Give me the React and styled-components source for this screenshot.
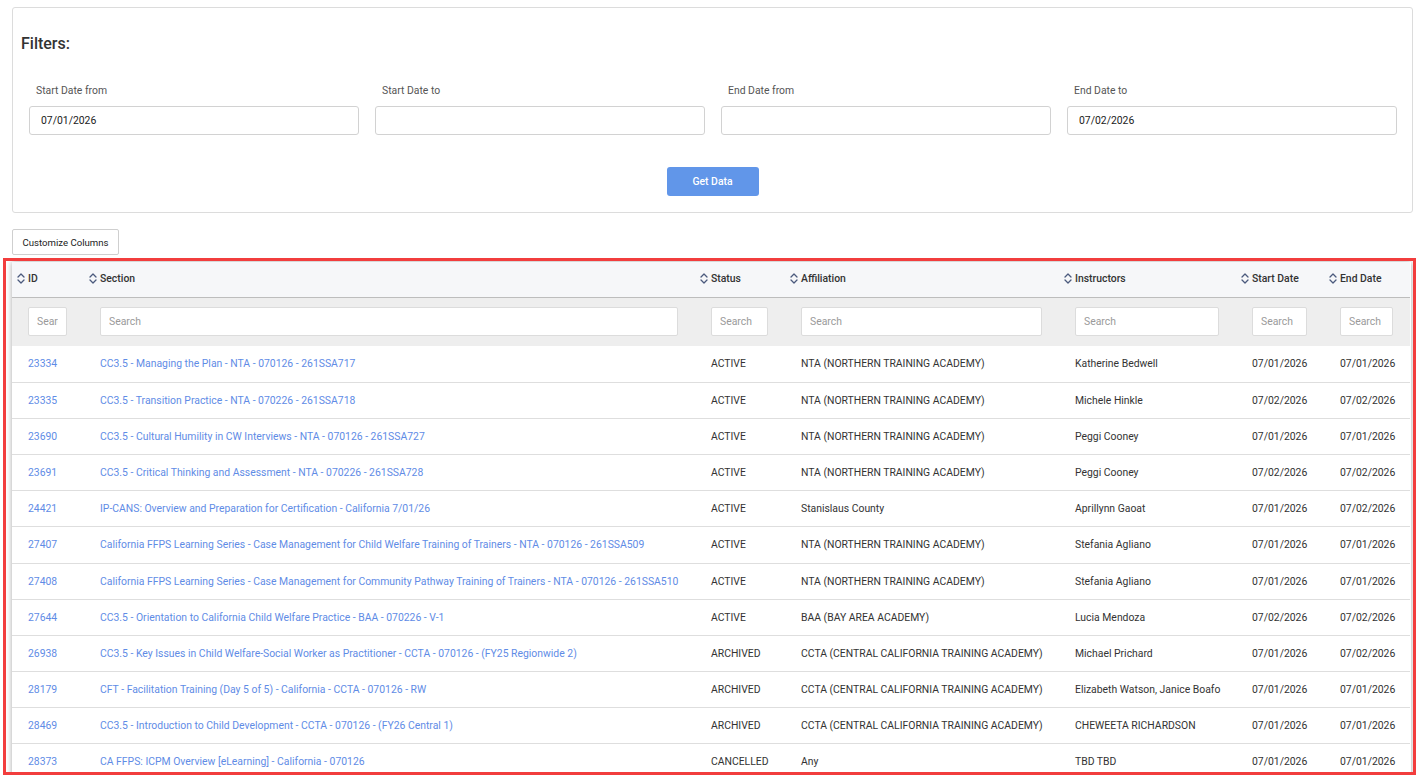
import React from "react";
import styled, { createGlobalStyle } from "styled-components";

const Global = createGlobalStyle`
  html, body { margin: 0; padding: 0; background: #fff; }
  body { font-family: Roboto, "Liberation Sans", Arial, sans-serif; color: #333; overflow: hidden; }
  * { box-sizing: border-box; }
`;

const Page = styled.div`
  padding: 7px 6px 0 12px;
  display: flex;
  flex-direction: column;
  height: 777px;
`;

const FilterCard = styled.section`
  border: 1px solid #dcdcdc;
  border-radius: 3px;
  padding: 26px 16px 16px 8px;
  display: flex;
  flex-direction: column;
`;

const Title = styled.h5`
  margin: 0;
  font-size: 16px;
  line-height: 19px;
  font-weight: 500;
  color: #333;
`;

const FilterGrid = styled.div`
  margin-top: 32px;
  padding-left: 8px;
  display: grid;
  grid-template-columns: repeat(4, 330px);
  column-gap: 16px;
`;

const Field = styled.div`
  display: flex;
  flex-direction: column;
`;

const Label = styled.label`
  font-size: 10.4px;
  line-height: 12px;
  color: #555;
  padding-left: 7px;
  margin-bottom: 9px;
`;

const DateInput = styled.input`
  height: 29px;
  border: 1px solid #d2d2d2;
  border-radius: 3px;
  padding: 0 11px;
  font-family: inherit;
  font-size: 10.4px;
  color: #222;
  outline: none;
`;

const ButtonRow = styled.div`
  display: flex;
  justify-content: center;
  margin-top: 32px;
  padding-left: 8px;
`;

const PrimaryButton = styled.button`
  width: 92px;
  height: 29px;
  background: #6196e9;
  border: none;
  border-radius: 3px;
  color: #fff;
  font-family: inherit;
  font-size: 10.4px;
  font-weight: 500;
`;

const SecondaryButton = styled.button`
  align-self: flex-start;
  margin-top: 16px;
  width: 107px;
  height: 26px;
  background: #fff;
  border: 1px solid #cfcfcf;
  border-radius: 2px;
  font-family: inherit;
  font-size: 9.6px;
  color: #222;
  padding: 0;
`;

const Highlight = styled.div`
  margin: 3px -3px 0 -9px;
  height: 517px;
  border: 3px solid #f23d3d;
  padding: 1px 2px 0 6px;
  overflow: hidden;
`;

const TableCard = styled.div`
  box-shadow: 0 0 6px rgba(0, 0, 0, 0.35);
  background: #fff;
`;

const Table = styled.table`
  width: 1398px;
  border-collapse: collapse;
  table-layout: fixed;
  font-size: 10.4px;
`;

const HeadCell = styled.th`
  height: 35px;
  padding: 0 5px;
  background: #f6f7f9;
  border-bottom: 1px solid #bdbdbd;
  text-align: left;
  font-weight: 500;
  color: #333;
  white-space: nowrap;
`;

const HeadInner = styled.span`
  display: inline-flex;
  align-items: center;
  gap: 3px;
`;

const FilterCell = styled.td`
  height: 49px;
  padding: 0 17px 0 16px;
  background: #eeeeee;
`;

const SearchInput = styled.input`
  width: 100%;
  height: 29px;
  border: 1px solid #dcdcdc;
  border-radius: 2px;
  background: #fff;
  padding: 0 8px;
  font-family: inherit;
  font-size: 10.4px;
  outline: none;
  &::placeholder { color: #9a9a9a; }
`;

const Cell = styled.td`
  height: 36.18px;
  padding: 0 16px;
  border-bottom: 1px solid #dedede;
  color: ${(p) => (p.$link ? "#5f8ce6" : "#333")};
  white-space: nowrap;
  overflow: hidden;
`;

const SortIcon = () => (
  <svg width="8" height="11" viewBox="0 0 8 11" fill="none" stroke="#4b5a7d" strokeWidth="1.3" strokeLinecap="round" strokeLinejoin="round">
    <path d="M1 4 L4 1 L7 4" />
    <path d="M1 7 L4 10 L7 7" />
  </svg>
);

const columns = [
  { key: "id", label: "ID", width: 72 },
  { key: "section", label: "Section", width: 611 },
  { key: "status", label: "Status", width: 90 },
  { key: "affiliation", label: "Affiliation", width: 274 },
  { key: "instructors", label: "Instructors", width: 177 },
  { key: "start", label: "Start Date", width: 88 },
  { key: "end", label: "End Date", width: 86 },
];

const NTA = "NTA (NORTHERN TRAINING ACADEMY)";
const CCTA = "CCTA (CENTRAL CALIFORNIA TRAINING ACADEMY)";

const rows = [
  ["23334", "CC3.5 - Managing the Plan - NTA - 070126 - 261SSA717", "ACTIVE", NTA, "Katherine Bedwell", "07/01/2026", "07/01/2026"],
  ["23335", "CC3.5 - Transition Practice - NTA - 070226 - 261SSA718", "ACTIVE", NTA, "Michele Hinkle", "07/02/2026", "07/02/2026"],
  ["23690", "CC3.5 - Cultural Humility in CW Interviews - NTA - 070126 - 261SSA727", "ACTIVE", NTA, "Peggi Cooney", "07/01/2026", "07/01/2026"],
  ["23691", "CC3.5 - Critical Thinking and Assessment - NTA - 070226 - 261SSA728", "ACTIVE", NTA, "Peggi Cooney", "07/02/2026", "07/02/2026"],
  ["24421", "IP-CANS: Overview and Preparation for Certification - California 7/01/26", "ACTIVE", "Stanislaus County", "Aprillynn Gaoat", "07/01/2026", "07/02/2026"],
  ["27407", "California FFPS Learning Series - Case Management for Child Welfare Training of Trainers - NTA - 070126 - 261SSA509", "ACTIVE", NTA, "Stefania Agliano", "07/01/2026", "07/01/2026"],
  ["27408", "California FFPS Learning Series - Case Management for Community Pathway Training of Trainers - NTA - 070126 - 261SSA510", "ACTIVE", NTA, "Stefania Agliano", "07/01/2026", "07/01/2026"],
  ["27644", "CC3.5 - Orientation to California Child Welfare Practice - BAA - 070226 - V-1", "ACTIVE", "BAA (BAY AREA ACADEMY)", "Lucia Mendoza", "07/02/2026", "07/02/2026"],
  ["26938", "CC3.5 - Key Issues in Child Welfare-Social Worker as Practitioner - CCTA - 070126 - (FY25 Regionwide 2)", "ARCHIVED", CCTA, "Michael Prichard", "07/01/2026", "07/02/2026"],
  ["28179", "CFT - Facilitation Training (Day 5 of 5) - California - CCTA - 070126 - RW", "ARCHIVED", CCTA, "Elizabeth Watson, Janice Boafo", "07/01/2026", "07/01/2026"],
  ["28469", "CC3.5 - Introduction to Child Development - CCTA - 070126 - (FY26 Central 1)", "ARCHIVED", CCTA, "CHEWEETA RICHARDSON", "07/01/2026", "07/01/2026"],
  ["28373", "CA FFPS: ICPM Overview [eLearning] - California - 070126", "CANCELLED", "Any", "TBD TBD", "07/01/2026", "07/01/2026"],
];

export default function App() {
  return (
    <>
      <Global />
      <Page>
        <FilterCard>
          <Title>Filters:</Title>
          <FilterGrid>
            <Field>
              <Label>Start Date from</Label>
              <DateInput defaultValue="07/01/2026" />
            </Field>
            <Field>
              <Label>Start Date to</Label>
              <DateInput defaultValue="" />
            </Field>
            <Field>
              <Label>End Date from</Label>
              <DateInput defaultValue="" />
            </Field>
            <Field>
              <Label>End Date to</Label>
              <DateInput defaultValue="07/02/2026" />
            </Field>
          </FilterGrid>
          <ButtonRow>
            <PrimaryButton>Get Data</PrimaryButton>
          </ButtonRow>
        </FilterCard>
        <SecondaryButton>Customize Columns</SecondaryButton>
        <Highlight>
          <TableCard>
            <Table>
              <colgroup>
                {columns.map((c) => (
                  <col key={c.key} style={{ width: c.width }} />
                ))}
              </colgroup>
              <thead>
                <tr>
                  {columns.map((c) => (
                    <HeadCell key={c.key}>
                      <HeadInner>
                        <SortIcon />
                        {c.label}
                      </HeadInner>
                    </HeadCell>
                  ))}
                </tr>
                <tr>
                  {columns.map((c) => (
                    <FilterCell key={c.key}>
                      <SearchInput placeholder="Search" />
                    </FilterCell>
                  ))}
                </tr>
              </thead>
              <tbody>
                {rows.map((r) => (
                  <tr key={r[0]}>
                    {r.map((v, i) => (
                      <Cell key={i} $link={i < 2}>
                        {v}
                      </Cell>
                    ))}
                  </tr>
                ))}
              </tbody>
            </Table>
          </TableCard>
        </Highlight>
      </Page>
    </>
  );
}
